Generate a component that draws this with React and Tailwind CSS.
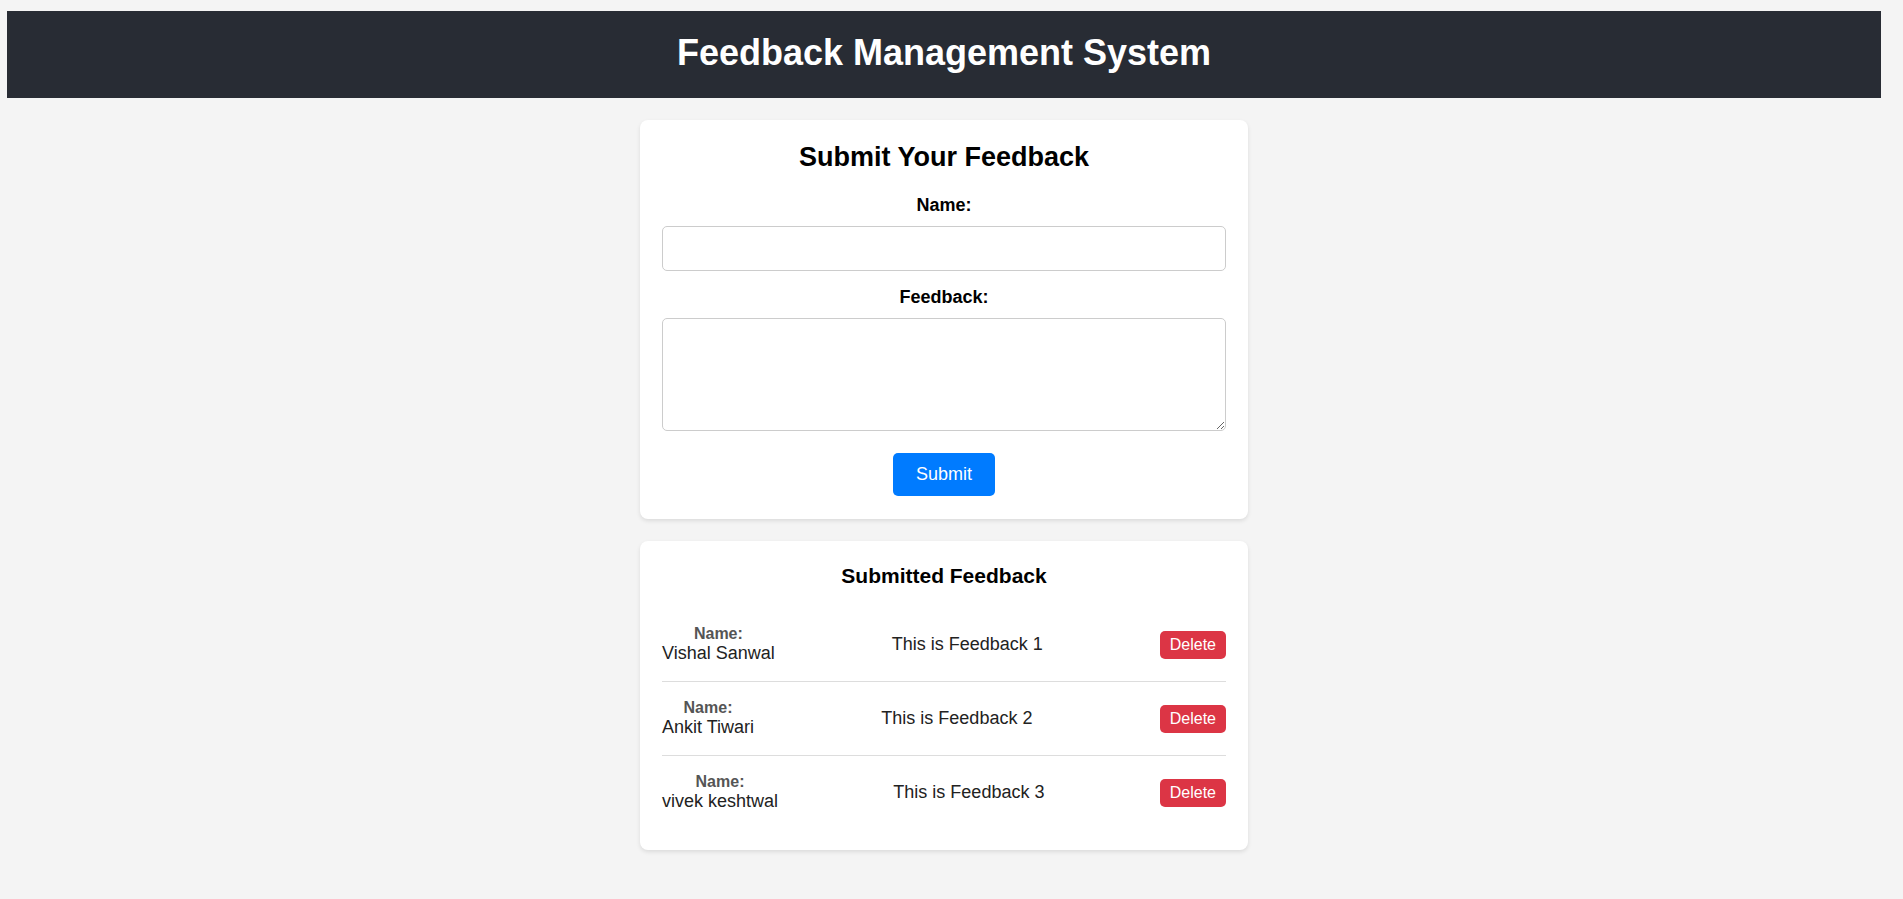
const feedbacks = [
  { id: 1, name: 'Vishal Sanwal', text: 'This is Feedback 1' },
  { id: 2, name: 'Ankit Tiwari', text: 'This is Feedback 2' },
  { id: 3, name: 'vivek keshtwal', text: 'This is Feedback 3' },
];

function FeedbackForm() {
  return (
    <div className="w-[608px] bg-white rounded-lg px-[22px] pt-[22px] pb-[23px] shadow-[0_2px_4px_rgba(0,0,0,0.1)]">
      <h2 className="text-[27px] leading-[31px] font-bold text-center text-black mb-[22px]">Submit Your Feedback</h2>
      <label className="block text-center text-[18px] leading-[21px] font-bold text-black mb-[10px]">Name:</label>
      <input
        type="text"
        className="block w-full h-[45px] border border-[#ccc] rounded-[5px] px-[10px] text-[18px] mb-[16px] outline-none"
      />
      <label className="block text-center text-[18px] leading-[21px] font-bold text-black mb-[10px]">Feedback:</label>
      <textarea className="block w-full h-[113px] border border-[#ccc] rounded-[5px] px-[10px] py-[8px] text-[18px] outline-none" />
      <div className="flex justify-center mt-[22px]">
        <button className="bg-[#007bff] text-white text-[18px] leading-[21px] px-[23px] py-[11px] rounded-[5px]">Submit</button>
      </div>
    </div>
  );
}

function FeedbackList() {
  return (
    <div className="w-[608px] bg-white rounded-lg px-[22px] pt-[23px] pb-[21px] shadow-[0_2px_4px_rgba(0,0,0,0.1)]">
      <h3 className="text-[21px] leading-[24px] font-bold text-center text-black mb-[20px]">Submitted Feedback</h3>
      <ul>
        {feedbacks.map((f, i) => (
          <li
            key={f.id}
            className={`flex items-center justify-between py-[17px] ${i < feedbacks.length - 1 ? 'border-b border-[#ddd]' : ''}`}
          >
            <div className="text-center">
              <div className="text-[16px] leading-[18px] font-bold text-[#555]">Name:</div>
              <div className="text-[18px] leading-[21px] text-[#222]">{f.name}</div>
            </div>
            <p className="text-[18px] leading-[21px] text-[#222]">{f.text}</p>
            <button className="bg-[#dc3545] text-white text-[16px] leading-[18px] px-[10px] py-[5px] rounded-[5px]">Delete</button>
          </li>
        ))}
      </ul>
    </div>
  );
}

export default function App() {
  return (
    <div className="min-h-screen bg-[#f4f4f4] pt-[11px] pl-[7px] pr-[22px] pb-[40px] font-['Liberation_Sans',Arial,sans-serif]">
      <header className="bg-[#282c34] h-[87px] pt-[21px]">
        <h1 className="text-center text-white text-[36px] leading-[41px] font-bold">Feedback Management System</h1>
      </header>
      <main className="flex flex-col items-center gap-[22px] mt-[22px]">
        <FeedbackForm />
        <FeedbackList />
      </main>
    </div>
  );
}
